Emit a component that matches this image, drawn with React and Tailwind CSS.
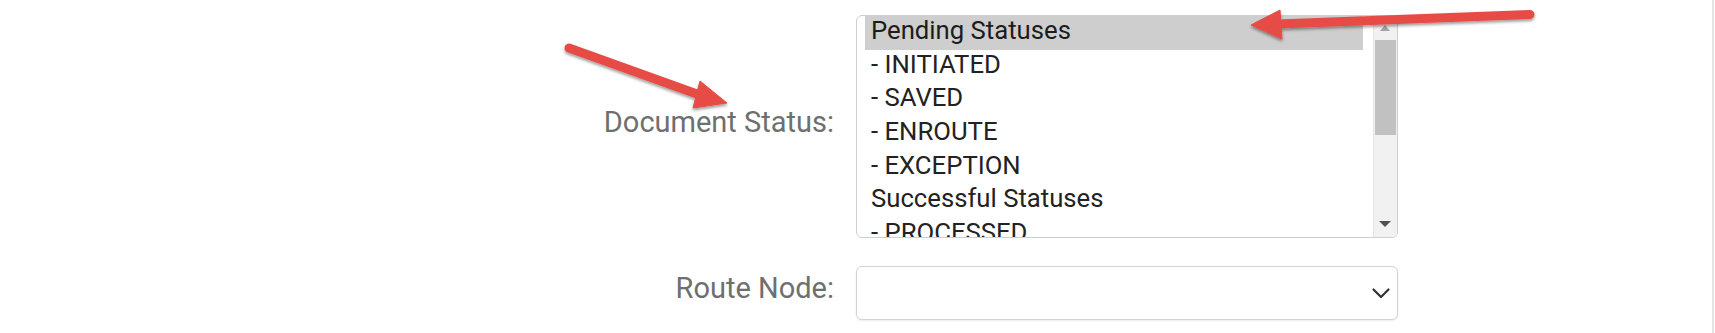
import React from "react";

const statuses = [
    "Pending Statuses",
    "- INITIATED",
    "- SAVED",
    "- ENROUTE",
    "- EXCEPTION",
    "Successful Statuses",
    "- PROCESSED",
];

const Arrows = () => (
    <svg
        className="absolute inset-0 pointer-events-none"
        width="1715"
        height="333"
        viewBox="0 0 1715 333"
    >
        <defs>
            <filter id="arrowShadow" x="-10%" y="-50%" width="120%" height="200%">
                <feDropShadow dx="0" dy="2" stdDeviation="1.6" floodColor="#000" floodOpacity="0.4" />
            </filter>
        </defs>
        <g filter="url(#arrowShadow)" fill="#e74c45" stroke="#e74c45">
            <line x1="569" y1="48" x2="697" y2="94" strokeWidth="9" strokeLinecap="round" />
            <polygon points="727,103 693,108 700,81" strokeWidth="1" strokeLinejoin="round" />
            <line x1="1530" y1="14.5" x2="1278" y2="24" strokeWidth="9" strokeLinecap="round" />
            <polygon points="1251,25 1280,10 1282,39" strokeWidth="1" strokeLinejoin="round" />
        </g>
    </svg>
);

const StatusListBox = () => (
    <div className="flex h-[223px] w-[542px] overflow-hidden rounded-[6px] border border-[#cfcfcf] bg-white">
        <div className="flex-1 overflow-hidden pl-[8px] pr-[10px]">
            {statuses.map((s, i) => (
                <div
                    key={s}
                    className={
                        i === 0
                            ? "h-[33.7px] shrink-0 whitespace-nowrap bg-[#cecece] pl-[6px] pb-[4.2px] text-[25.7px] leading-[29.5px] text-[#1c1c1c]"
                            : "h-[33.7px] shrink-0 whitespace-nowrap pl-[6px] pb-[4.2px] text-[25.7px] leading-[29.5px] text-[#222]"
                    }
                >
                    {s}
                </div>
            ))}
        </div>
        {/* fake scrollbar */}
        <div className="relative w-[24px] shrink-0 border-l border-[#e6e6e6] bg-[#f1f1f1]">
            <div className="absolute left-[6px] top-[9px] h-0 w-0 border-x-[5px] border-b-[6px] border-x-transparent border-b-[#a3a3a3]" />
            <div className="absolute left-[1px] right-[1px] top-[24px] h-[95px] bg-[#c1c1c1]" />
            <div className="absolute bottom-[10px] left-[5px] h-0 w-0 border-x-[6px] border-t-[6px] border-x-transparent border-t-[#505050]" />
        </div>
    </div>
);

const RouteNodeSelect = () => (
    <div className="flex h-[54px] w-[542px] items-center justify-end rounded-[6px] border border-[#d4d4d4] bg-white pr-[7px] shadow-[0_1px_2px_rgba(0,0,0,0.08)]">
        <svg width="18" height="11" viewBox="0 0 18 11" fill="none">
            <path d="M1.5 1.5 L9 9 L16.5 1.5" stroke="#333" strokeWidth="2.2" strokeLinecap="round" strokeLinejoin="round" />
        </svg>
    </div>
);

const FormRow = ({ label, children }) => (
    <div className="flex items-center">
        <div className="mb-[10px] w-[834px] shrink-0 whitespace-nowrap text-right text-[29px] leading-[32px] text-[#6f6f6f]">
            {label}
        </div>
        <div className="ml-[22px]">{children}</div>
    </div>
);

export default function App() {
    return (
        <div
            className="relative h-[333px] w-[1715px] overflow-hidden bg-white"
            style={{ fontFamily: "Roboto, 'Liberation Sans', sans-serif" }}
        >
            <div className="flex h-full w-[1714px] flex-col gap-[28px] border-r-2 border-[#e4e4e4] pt-[15px]">
                <FormRow label="Document Status:">
                    <StatusListBox />
                </FormRow>
                <FormRow label="Route Node:">
                    <RouteNodeSelect />
                </FormRow>
            </div>
            <Arrows />
        </div>
    );
}
